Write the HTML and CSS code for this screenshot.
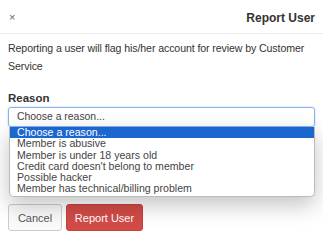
FILE: index.html
```html
<!DOCTYPE html>
<html lang="en">
<head>
  <meta charset="UTF-8">
  <title>Report User</title>
  <link rel="stylesheet" href="styles.css">
</head>
<body>
  <div class="modal-header">
    <span class="close">&times;</span>
    <h4 class="modal-title">Report User</h4>
  </div>

  <div class="modal-body">
    <p>Reporting a user will flag his/her account for review by Customer Service</p>

    <label class="field-label">Reason</label>
    <div class="select-wrap">
      <div class="select-box">Choose a reason...</div>
      <ul class="select-list">
        <li class="selected">Choose a reason...</li>
        <li>Member is abusive</li>
        <li>Member is under 18 years old</li>
        <li>Credit card doesn't belong to member</li>
        <li>Possible hacker</li>
        <li>Member has technical/billing problem</li>
      </ul>
    </div>
  </div>

  <div class="modal-footer">
    <button class="btn btn-default">Cancel</button>
    <button class="btn btn-danger">Report User</button>
  </div>
</body>
</html>
```

FILE: styles.css
```css
body { margin: 0; font-family: "Liberation Sans", Arial, sans-serif; color: #333; background: #fff; }

.modal-header { display: flex; justify-content: space-between; align-items: center; height: 34px; padding: 2px 8px 0 9px; border-bottom: 1px solid #ebebeb; box-sizing: border-box; }
.close { font-size: 11px; color: #666; line-height: 1; }
.modal-title { margin: 0; font-size: 12px; font-weight: bold; }

.modal-body { padding: 5px 8px 0; }
.modal-body p { margin: 0 0 17px; font-size: 10.6px; letter-spacing: -0.1px; line-height: 18px; }

.field-label { display: block; font-size: 11.5px; font-weight: bold; margin-bottom: 3px; }

.select-wrap { position: relative; height: 20px; }
.select-box { height: 20px; box-sizing: border-box; border: 1px solid #8ab4f0; border-radius: 3px; box-shadow: 0 0 2px #a9c8f5; font-size: 10.4px; color: #444; padding: 3px 8px; }
.select-list { position: absolute; top: 20px; left: 1px; right: 0; margin: 0; padding: 0 0 1px; list-style: none; background: #fff; border: 1px solid #bbb; border-top: 0; border-radius: 0 0 5px 5px; box-shadow: 0 8px 22px rgba(0,0,0,0.24); font-size: 10.6px; line-height: 11.3px; color: #444; z-index: 2; }
.select-list li { padding: 0 7px; }
.select-list li.selected { background: #1c66d0; color: #fff; }

.modal-footer { display: flex; gap: 4px; padding: 77px 8px 0; }
.btn { font-family: inherit; font-size: 11px; height: 27px; border-radius: 3px; padding: 0; white-space: nowrap; border: 1px solid #ccc; }
.btn-default { background: #fafafa; color: #555; width: 54px; }
.btn-danger { background: #d24b47; border-color: #c9403c; color: #fff; width: 77px; }
```
